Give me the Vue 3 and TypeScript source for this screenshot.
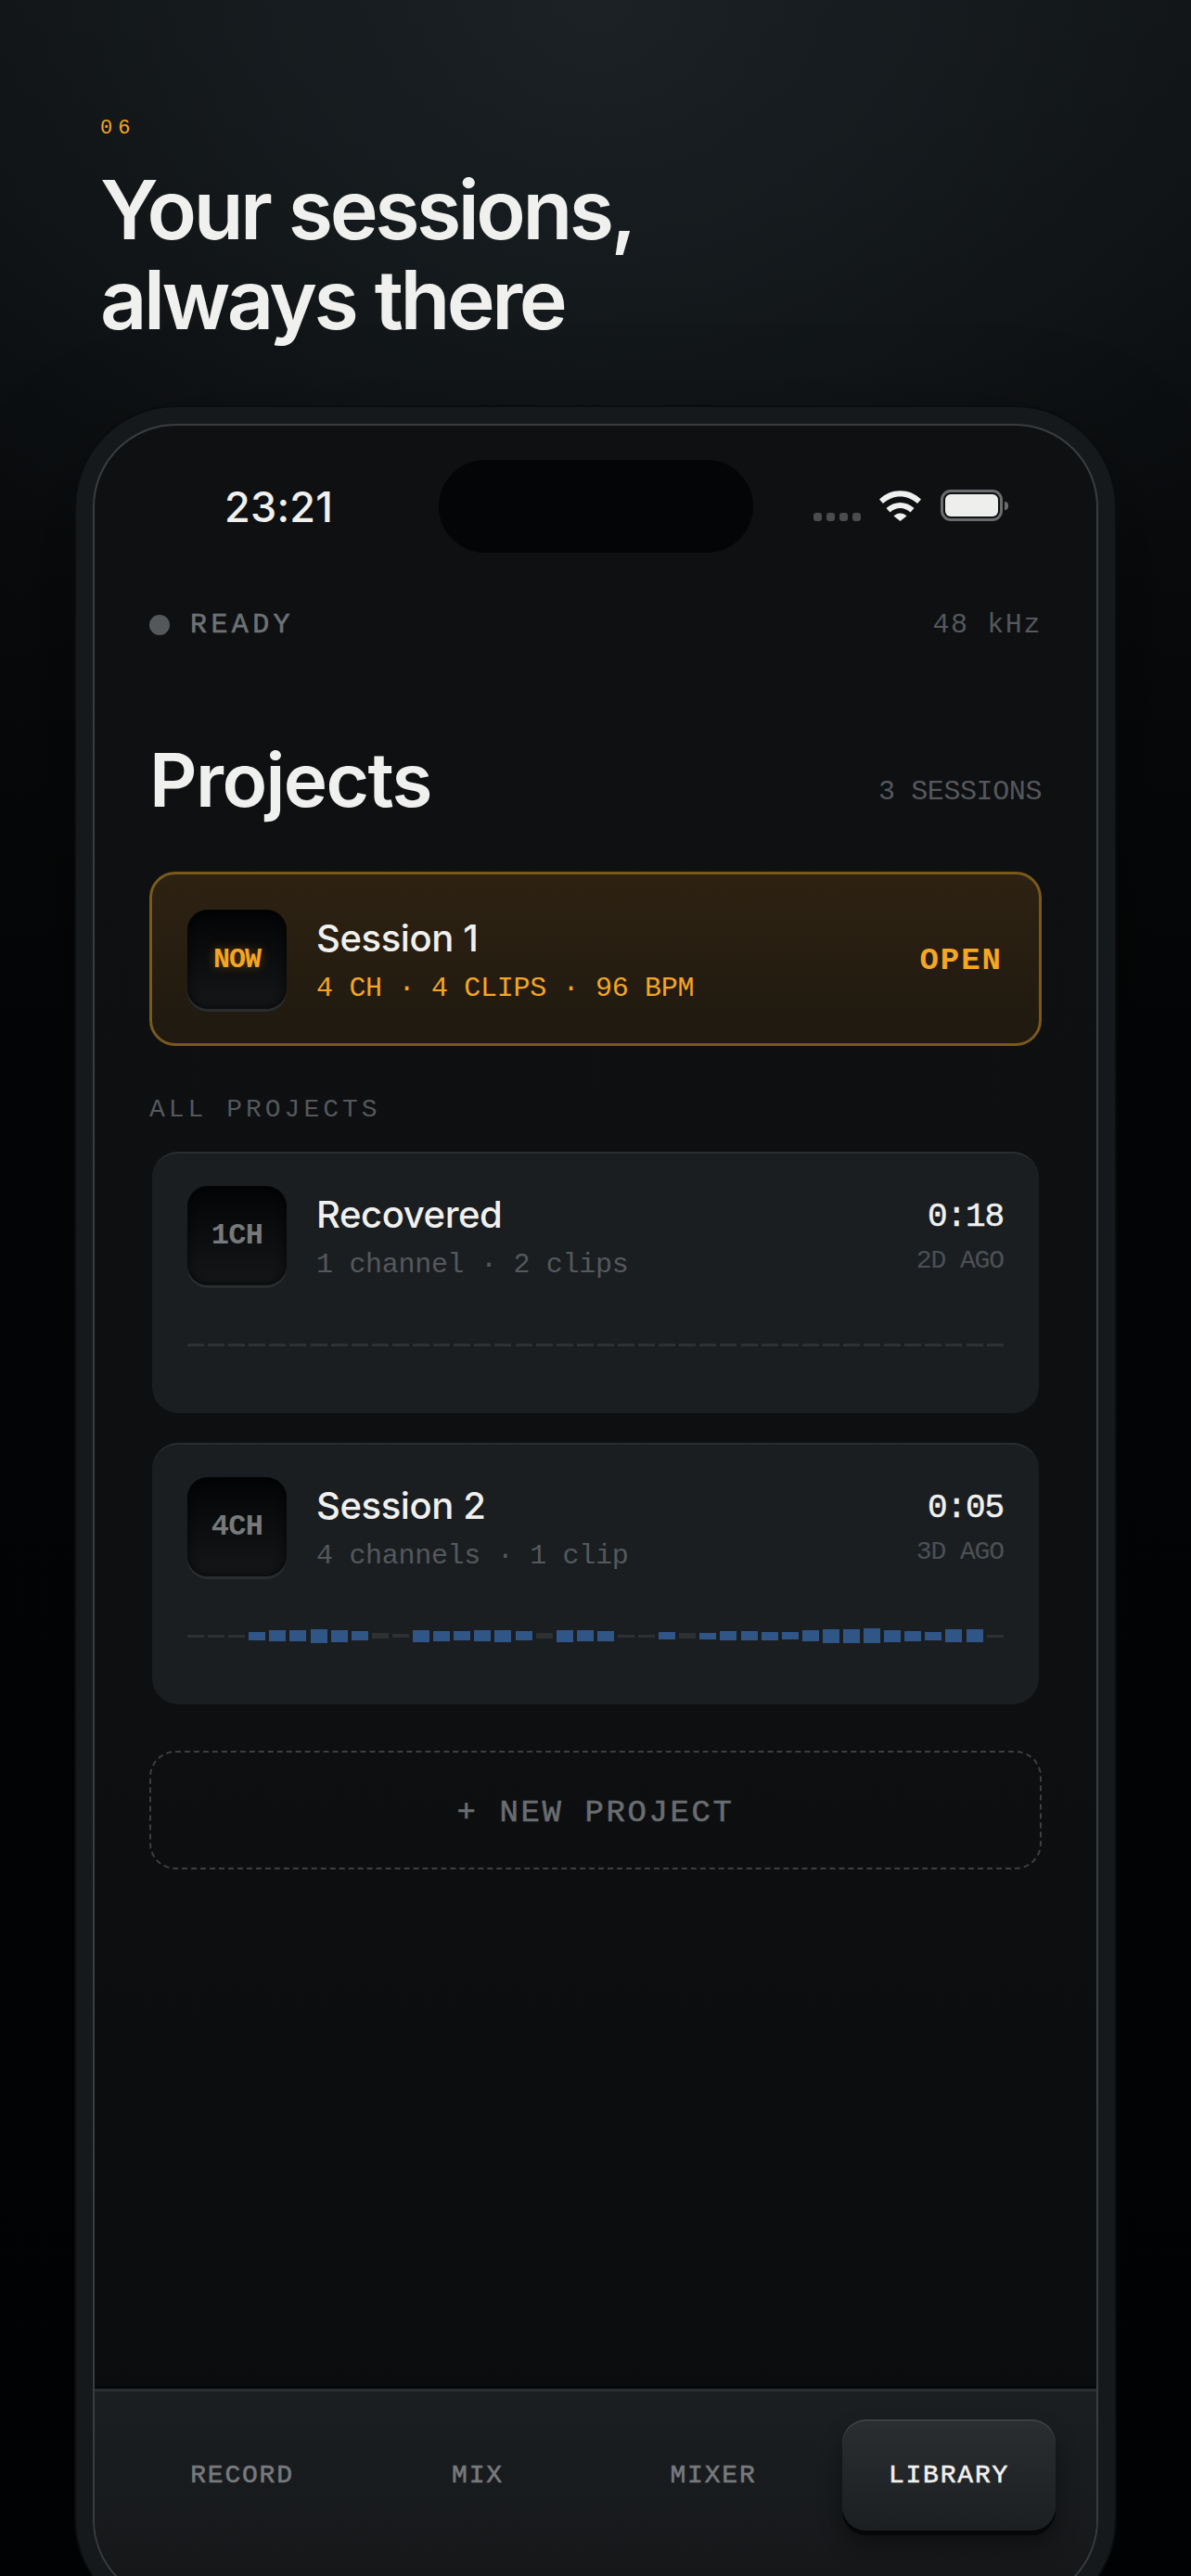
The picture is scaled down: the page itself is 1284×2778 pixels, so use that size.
<template>
  <div class="page">
    <header class="hero">
      <div class="step">06</div>
      <h1>Your sessions,<br />always there</h1>
    </header>

    <div class="phone">
      <div class="screen">
        <div class="status">
          <div class="time">23:21</div>
          <div class="island"></div>
          <div class="status-icons">
            <div class="signal">
              <i v-for="n in 4" :key="n"></i>
            </div>
            <svg class="wifi" width="45" height="33" viewBox="0 0 45 33" fill="#f0f0ee">
              <path d="M0 9.5C12-3 33-3 45 9.5L41 14C30 4 15 4 4 14Z" />
              <path d="M7.5 19C16 11 29 11 37.5 19L33.5 23.5C27 17.5 18 17.5 11.5 23.5Z" />
              <path d="M15.5 27.5C19.5 23.5 25.5 23.5 29.5 27.5L22.5 33Z" />
            </svg>
            <div class="battery"><div class="battery-fill"></div></div>
            <div class="battery-nub"></div>
          </div>
        </div>

        <div class="content">
          <div class="ready-row">
            <div class="ready"><span class="dot"></span>READY</div>
            <div class="rate">48 kHz</div>
          </div>

          <div class="title-row">
            <h2>Projects</h2>
            <span class="count">3 SESSIONS</span>
          </div>

          <div class="featured">
            <div class="badge badge-now">NOW</div>
            <div class="info">
              <div class="name">Session 1</div>
              <div class="meta meta-now">4 CH · 4 CLIPS · 96 BPM</div>
            </div>
            <div class="open">OPEN</div>
          </div>

          <div class="section-label">ALL PROJECTS</div>

          <div class="card" v-for="item in projects" :key="item.name">
            <div class="card-top">
              <div class="badge">{{ item.badge }}</div>
              <div class="info">
                <div class="name">{{ item.name }}</div>
                <div class="meta">{{ item.meta }}</div>
              </div>
              <div class="side">
                <div class="length">{{ item.length }}</div>
                <div class="ago">{{ item.ago }}</div>
              </div>
            </div>
            <div class="wave">
              <i
                v-for="(bar, index) in item.bars"
                :key="index"
                :class="{ on: bar.on }"
                :style="{ height: bar.h + 'px' }"
              ></i>
            </div>
          </div>

          <div class="new-project">+ NEW PROJECT</div>
        </div>

        <nav class="tabs">
          <div class="tab" v-for="tab in tabs" :key="tab" :class="{ active: tab === 'LIBRARY' }">{{ tab }}</div>
        </nav>
      </div>
    </div>
  </div>
</template>

<script setup lang="ts">
interface Bar {
  h: number
  on: boolean
}

interface Project {
  badge: string
  name: string
  meta: string
  length: string
  ago: string
  bars: Bar[]
}

const tabs = ['RECORD', 'MIX', 'MIXER', 'LIBRARY']

// negative = quiet grey bar, positive = blue bar
const levels = [
  -3, -3, -3, 9, 12, 12, 15, 13, 10, -6, -4, 13, 11, 10, 12, 13, 10, -6, 13, 12,
  11, -3, -3, 8, -6, 7, 10, 10, 9, 8, 12, 15, 15, 16, 13, 11, 9, 14, 14, -3
]

const projects: Project[] = [
  {
    badge: '1CH',
    name: 'Recovered',
    meta: '1 channel · 2 clips',
    length: '0:18',
    ago: '2D AGO',
    bars: Array.from({ length: 40 }, () => ({ h: 3, on: false }))
  },
  {
    badge: '4CH',
    name: 'Session 2',
    meta: '4 channels · 1 clip',
    length: '0:05',
    ago: '3D AGO',
    bars: levels.map(l => ({ h: Math.abs(l), on: l > 0 }))
  }
]
</script>

<style>
html,
body {
  margin: 0;
  padding: 0;
  height: 2778px;
  overflow: hidden;
  background: #030405;
}
</style>

<style scoped>
.page {
  height: 2778px;
  overflow: hidden;
  background:
    radial-gradient(ellipse 900px 760px at 50% 0, #1b2125 0%, rgba(27, 33, 37, 0) 100%),
    linear-gradient(#0f1214 0, #0a0c0e 500px, #040506 1100px, #020304 100%);
  font-family: "Liberation Mono", monospace;
  color: #f0f0ee;
}

.hero {
  padding: 127px 108px 0;
  height: 312px;
}

.step {
  font-size: 22px;
  line-height: 24px;
  letter-spacing: 0.28em;
  color: #f5a623;
}

h1 {
  margin: 27px 0 0;
  font-family: Inter, sans-serif;
  font-size: 88px;
  line-height: 97px;
  font-weight: 600;
  letter-spacing: -0.04em;
  word-spacing: 0.02em;
  color: #f0f0ee;
}

.phone {
  width: 1120px;
  height: 2386px;
  box-sizing: border-box;
  margin-left: 82px;
  padding: 18px;
  background: #15191c;
  border-radius: 108px;
  box-shadow:
    0 0 0 2px #0a0c0d,
    0 40px 120px rgba(0, 0, 0, 0.4);
}

.screen {
  height: 100%;
  box-sizing: border-box;
  display: flex;
  flex-direction: column;
  border: 2px solid #3a3d40;
  border-radius: 90px;
  overflow: hidden;
  background: linear-gradient(#0e1012, #0d0f11 60%, #0a0b0c);
}

.status {
  display: grid;
  grid-template-columns: 371px 339px 1fr;
  align-items: center;
  margin-top: 37px;
  height: 100px;
  flex: none;
}

.time {
  padding-left: 140px;
  font-family: Inter, sans-serif;
  font-size: 45px;
  font-weight: 500;
  letter-spacing: 0.005em;
  color: #f0f0ee;
}

.island {
  height: 100px;
  border-radius: 50px;
  background: #040506;
}

.status-icons {
  display: flex;
  align-items: center;
  justify-content: flex-end;
  padding-right: 95px;
  margin-top: -2px;
}

.signal {
  display: flex;
  gap: 5px;
  margin-top: 25px;
  margin-right: 20px;
}

.signal i {
  display: block;
  width: 9px;
  height: 9px;
  border-radius: 3px;
  background: #4a4c4e;
}

.wifi {
  margin-right: 21px;
}

.battery {
  width: 67px;
  height: 34px;
  box-sizing: border-box;
  border: 3px solid #6a6c6e;
  border-radius: 11px;
  padding: 2px;
}

.battery-fill {
  height: 100%;
  border-radius: 6px;
  background: #eeeeec;
}

.battery-nub {
  width: 4px;
  height: 9px;
  margin-left: 2px;
  border-radius: 0 4px 4px 0;
  background: #6a6c6e;
}

.content {
  flex: 1;
  padding: 0 59px;
}

.ready-row {
  display: flex;
  justify-content: space-between;
  align-items: center;
  margin-top: 61px;
  height: 34px;
  font-size: 30px;
}

.ready {
  display: flex;
  align-items: center;
  letter-spacing: 4.4px;
  -webkit-text-stroke: 0.6px #6f7275;
  color: #6f7275;
}

.dot {
  width: 22px;
  height: 22px;
  border-radius: 50%;
  margin-right: 22px;
  background: #55585b;
  -webkit-text-stroke: 0;
}

.rate {
  letter-spacing: 1.6px;
  color: #55585c;
}

.title-row {
  display: flex;
  justify-content: space-between;
  align-items: baseline;
  margin-top: 106px;
}

h2 {
  margin: 0;
  font-family: Inter, sans-serif;
  font-size: 80px;
  line-height: 88px;
  font-weight: 600;
  letter-spacing: -0.02em;
  color: #f0f0ee;
}

.count {
  font-size: 30px;
  letter-spacing: -0.4px;
  color: #55585c;
  position: relative;
  top: -8px;
}

.featured {
  display: flex;
  align-items: center;
  gap: 32px;
  height: 188px;
  box-sizing: border-box;
  margin-top: 55px;
  padding: 0 39px 0 38px;
  border: 3px solid #7a5a1c;
  border-radius: 28px;
  background: linear-gradient(#2e2212, #1f1910);
}

.badge {
  flex: none;
  width: 107px;
  height: 107px;
  box-sizing: border-box;
  display: flex;
  align-items: center;
  justify-content: center;
  border-radius: 22px;
  background: linear-gradient(#030405, #141618);
  box-shadow:
    inset 0 0 10px rgba(0, 0, 0, 0.8),
    0 3px 0 #2a2d2f;
  font-size: 32px;
  font-weight: 700;
  letter-spacing: -0.7px;
  color: #77797b;
}

.badge-now {
  font-size: 30px;
  letter-spacing: -1px;
  padding-top: 2px;
  color: #f5a623;
  text-shadow: 0 0 12px rgba(245, 166, 35, 0.35);
}

.info {
  flex: 1;
  padding-top: 2px;
}

.name {
  font-family: Inter, sans-serif;
  font-size: 40px;
  line-height: 48px;
  font-weight: 500;
  letter-spacing: -0.01em;
  color: #f0f0ee;
}

.meta {
  margin-top: 13px;
  font-size: 30px;
  line-height: 34px;
  letter-spacing: -0.3px;
  color: #55585c;
}

.meta-now {
  color: #f5a623;
}

.open {
  padding-top: 3px;
  font-size: 34px;
  font-weight: 700;
  letter-spacing: 2px;
  color: #f5a623;
}

.section-label {
  margin-top: 53px;
  font-size: 28px;
  line-height: 32px;
  letter-spacing: 4px;
  color: #55585c;
}

.card {
  width: 956px;
  height: 282px;
  box-sizing: border-box;
  margin: 0 auto 32px;
  padding: 35px 38px 0;
  border-top: 2px solid #2a2e31;
  border-radius: 28px;
  background: #1a1e21;
}

.section-label + .card {
  margin-top: 29px;
}

.card-top {
  display: flex;
  align-items: center;
  gap: 32px;
}

.side {
  text-align: right;
  padding-top: 3px;
}

.length {
  font-size: 36px;
  line-height: 42px;
  letter-spacing: -1.1px;
  -webkit-text-stroke: 0.5px #f0f0ee;
  color: #f0f0ee;
}

.ago {
  margin-top: 10px;
  font-size: 28px;
  line-height: 32px;
  letter-spacing: -1.1px;
  color: #4d5054;
}

.wave {
  display: flex;
  align-items: center;
  justify-content: space-between;
  height: 40px;
  margin-top: 44px;
}

.wave i {
  display: block;
  width: 18px;
  background: #2e3134;
}

.wave i.on {
  background: #2f5687;
}

.new-project {
  display: flex;
  align-items: center;
  justify-content: center;
  height: 128px;
  box-sizing: border-box;
  margin-top: 50px;
  padding-top: 5px;
  border: 2px dashed #3d4043;
  border-radius: 28px;
  font-size: 34px;
  letter-spacing: 2.6px;
  -webkit-text-stroke: 0.6px #6a6d70;
  color: #6a6d70;
}

.tabs {
  flex: none;
  display: flex;
  gap: 24px;
  height: 229px;
  box-sizing: border-box;
  padding: 30px 43px 0 44px;
  border-top: 3px solid #2a2e31;
  background: linear-gradient(#1b1f22, #151618);
  box-shadow: 0 -3px 0 #060708;
}

.tab {
  width: 230px;
  height: 120px;
  display: flex;
  align-items: center;
  justify-content: center;
  border-radius: 26px;
  font-size: 28px;
  letter-spacing: 1.8px;
  -webkit-text-stroke: 0.6px #777a7d;
  color: #777a7d;
}

.tab.active {
  color: #f0f0ee;
  -webkit-text-stroke: 0.6px #f0f0ee;
  background: linear-gradient(#2b2e31, #1c1f21);
  box-shadow:
    inset 0 2px 0 #3c3f42,
    0 5px 0 #060708,
    0 14px 24px rgba(0, 0, 0, 0.4);
}
</style>
